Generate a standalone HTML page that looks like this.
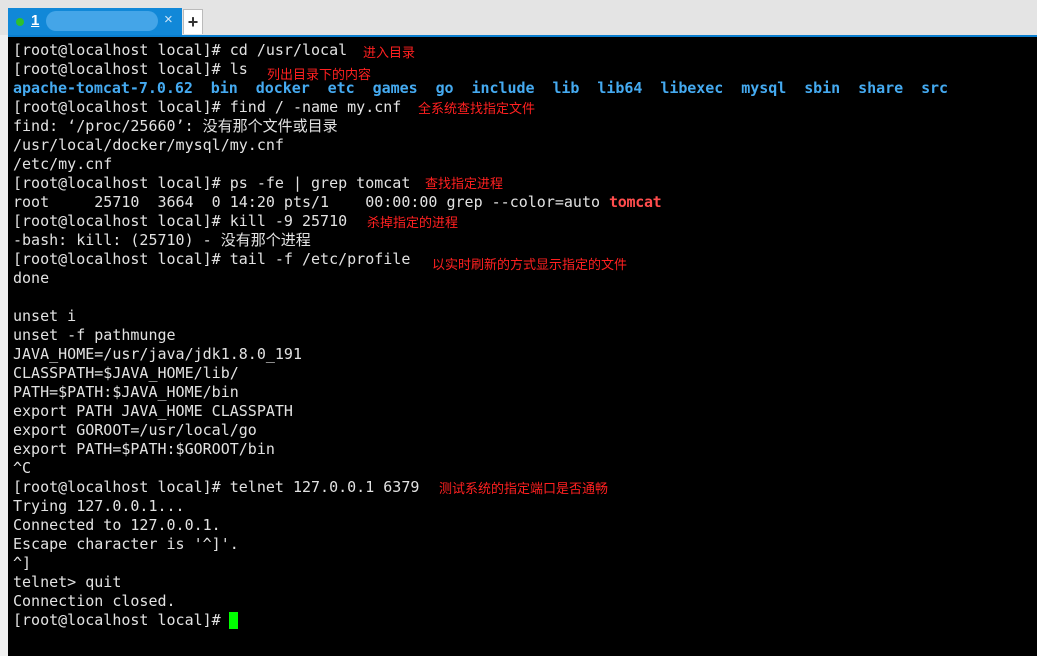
<!DOCTYPE html>
<html><head><meta charset="utf-8"><style>
body{margin:0;width:1037px;height:656px;overflow:hidden;background:#f0f0f0;position:relative;font-family:"DejaVu Sans Mono","Liberation Mono","Noto Sans CJK SC",monospace;}
#bar{position:absolute;left:0;top:0;width:1037px;height:35px;background:#e4e4e4;}
#line{position:absolute;left:8px;top:35px;width:1029px;height:2px;background:#0a7fd0;}
#tab{position:absolute;left:8px;top:8px;width:174px;height:27px;background:#1188d8;}
#plus{position:absolute;left:183px;top:9px;width:20px;height:25px;background:#fff;border:1px solid #bbb;border-bottom:none;box-sizing:border-box;font:bold 18px "Liberation Sans",sans-serif;color:#333;text-align:center;line-height:24px;}
#term{position:absolute;left:8px;top:37px;width:1029px;height:619px;background:#000;}
.l{position:absolute;left:13px;font-size:15px;line-height:19px;color:#e2e2e2;white-space:pre;}
.b{color:#45aaf0;font-weight:bold;letter-spacing:-0.04px;}
.r{color:#ff4d4d;font-weight:bold;letter-spacing:-0.3px;}
.a{position:absolute;font-family:"Noto Sans CJK SC",sans-serif;font-size:13px;color:#ff2020;line-height:14px;white-space:pre;}
</style></head><body>
<div id="bar"></div><div id="line"></div>
<div id="tab">
<div style="position:absolute;left:8px;top:10px;width:8px;height:8px;border-radius:50%;background:#2ec02e"></div>
<div style="position:absolute;left:23px;top:4px;color:#fff;font:bold 15px 'Liberation Sans',sans-serif;text-decoration:underline">1</div>
<div style="position:absolute;left:38px;top:3px;width:112px;height:20px;border-radius:10px;background:#4aa8ea;opacity:.9"></div>
<div style="position:absolute;left:156px;top:3px;color:#cfe6f8;font:15px 'Liberation Sans',sans-serif">×</div>
</div>
<div id="plus">+</div>
<div id="term"></div>
<div class="l" style="top:41px">[root@localhost local]# cd /usr/local</div>
<div class="l" style="top:60px">[root@localhost local]# ls</div>
<div class="l b" style="top:79px">apache-tomcat-7.0.62  bin  docker  etc  games  go  include  lib  lib64  libexec  mysql  sbin  share  src</div>
<div class="l" style="top:98px">[root@localhost local]# find / -name my.cnf</div>
<div class="l" style="top:117px">find: ‘/proc/25660’: 没有那个文件或目录</div>
<div class="l" style="top:136px">/usr/local/docker/mysql/my.cnf</div>
<div class="l" style="top:155px">/etc/my.cnf</div>
<div class="l" style="top:174px">[root@localhost local]# ps -fe | grep tomcat</div>
<div class="l" style="top:193px">root     25710  3664  0 14:20 pts/1    00:00:00 grep --color=auto <span class="r">tomcat</span></div>
<div class="l" style="top:212px">[root@localhost local]# kill -9 25710</div>
<div class="l" style="top:231px">-bash: kill: (25710) - 没有那个进程</div>
<div class="l" style="top:250px">[root@localhost local]# tail -f /etc/profile</div>
<div class="l" style="top:269px">done</div>
<div class="l" style="top:307px">unset i</div>
<div class="l" style="top:326px">unset -f pathmunge</div>
<div class="l" style="top:345px">JAVA_HOME=/usr/java/jdk1.8.0_191</div>
<div class="l" style="top:364px">CLASSPATH=$JAVA_HOME/lib/</div>
<div class="l" style="top:383px">PATH=$PATH:$JAVA_HOME/bin</div>
<div class="l" style="top:402px">export PATH JAVA_HOME CLASSPATH</div>
<div class="l" style="top:421px">export GOROOT=/usr/local/go</div>
<div class="l" style="top:440px">export PATH=$PATH:$GOROOT/bin</div>
<div class="l" style="top:459px">^C</div>
<div class="l" style="top:478px">[root@localhost local]# telnet 127.0.0.1 6379</div>
<div class="l" style="top:497px">Trying 127.0.0.1...</div>
<div class="l" style="top:516px">Connected to 127.0.0.1.</div>
<div class="l" style="top:535px">Escape character is '^]'.</div>
<div class="l" style="top:554px">^]</div>
<div class="l" style="top:573px">telnet&gt; quit</div>
<div class="l" style="top:592px">Connection closed.</div>
<div class="l" style="top:611px">[root@localhost local]# </div>
<div style="position:absolute;left:229px;top:612px;width:9px;height:17px;background:#00ff00"></div>
<div class="a" style="left:363px;top:45px">进入目录</div>
<div class="a" style="left:267px;top:67px">列出目录下的内容</div>
<div class="a" style="left:418px;top:101px">全系统查找指定文件</div>
<div class="a" style="left:425px;top:176px">查找指定进程</div>
<div class="a" style="left:367px;top:215px">杀掉指定的进程</div>
<div class="a" style="left:432px;top:257px">以实时刷新的方式显示指定的文件</div>
<div class="a" style="left:439px;top:481px">测试系统的指定端口是否通畅</div>
</body></html>
